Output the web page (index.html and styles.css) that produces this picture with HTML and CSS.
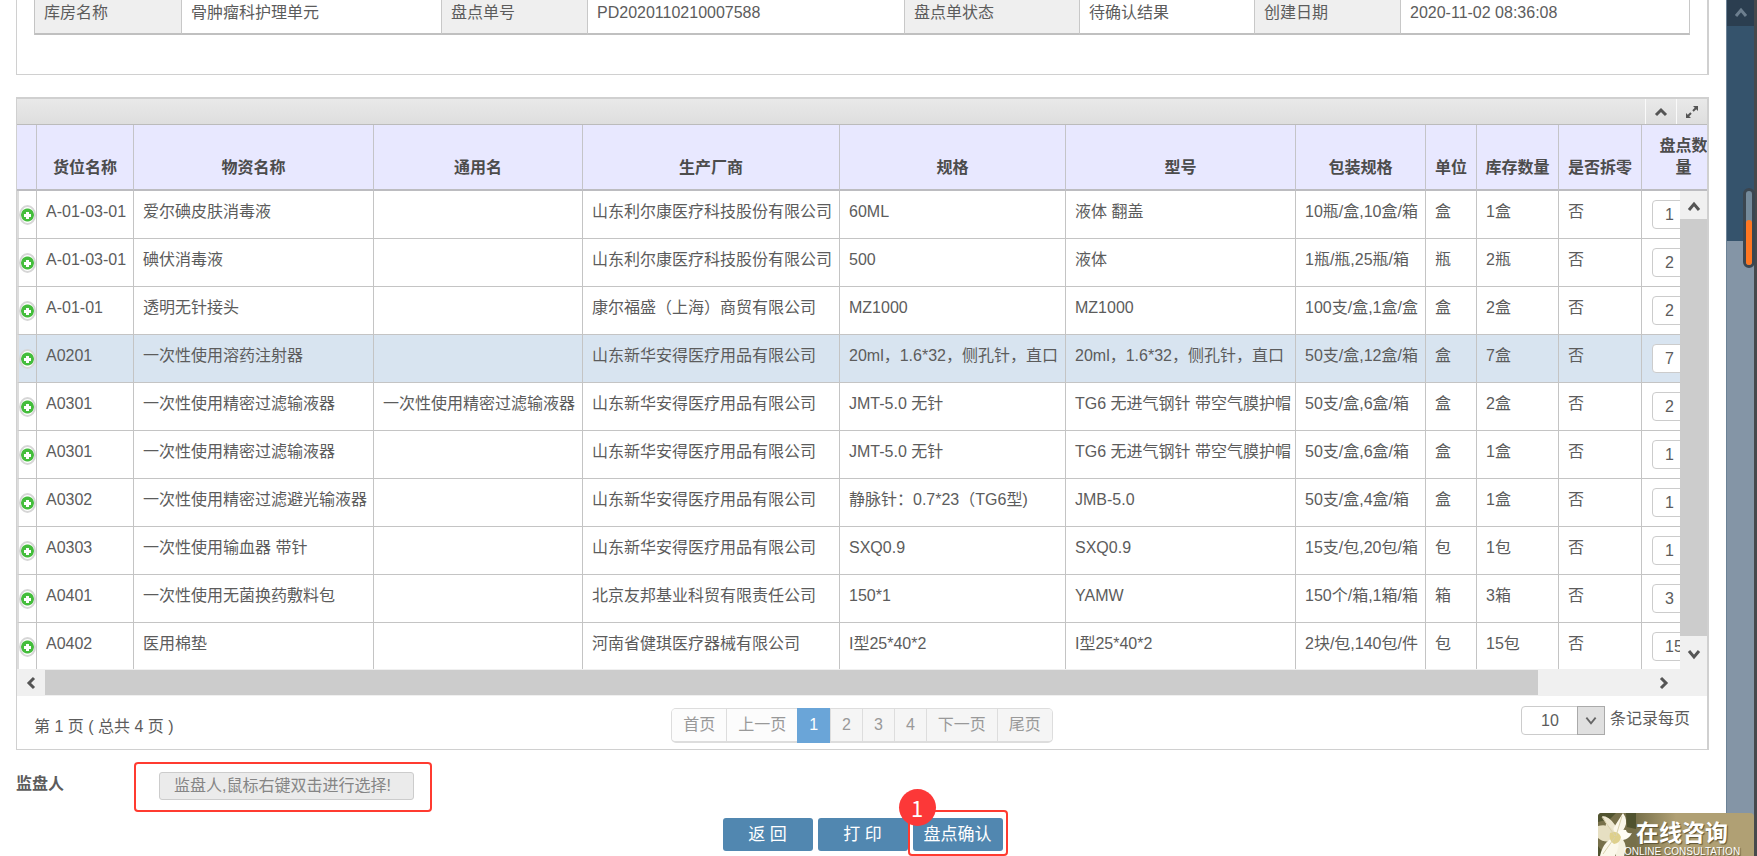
FILE: index.html
```html
<!DOCTYPE html>
<html lang="zh-CN">
<head>
    <meta charset="UTF-8">
    <meta name="viewport" content="width=device-width, initial-scale=1.0">
    <title>盘点单</title>
    <link rel="stylesheet" href="styles.css">
</head>
<body>

    <main class="content">
        <section class="panel info-panel">
            <table class="info">
                <colgroup>
                    <col class="i-store"><col class="i-store-val"><col class="i-no"><col class="i-no-val">
                    <col class="i-state"><col class="i-state"><col class="i-no"><col>
                </colgroup>
                <tr>
                    <th>库房名称</th><td>骨肿瘤科护理单元</td>
                    <th>盘点单号</th><td>PD2020110210007588</td>
                    <th>盘点单状态</th><td>待确认结果</td>
                    <th>创建日期</th><td>2020-11-02 08:36:08</td>
                </tr>
            </table>
        </section>

        <section class="panel grid-panel">
            <div class="toolbar">
                <button type="button" class="tool" aria-label="收起">
                    <svg width="14" height="10" viewBox="0 0 14 10"><path d="M2 8l5-5 5 5" fill="none" stroke="#555" stroke-width="3"/></svg>
                </button>
                <button type="button" class="tool" aria-label="全屏">
                    <svg width="14" height="14" viewBox="0 0 14 14"><path d="M8 1h5v5zM1 8v5h5z" fill="#555"/><path d="M11 3L8 6M3 11l3-3" stroke="#555" stroke-width="2"/></svg>
                </button>
            </div>

            <div class="grid-head">
                <table class="grid">
                    <colgroup>
                        <col class="c-plus"><col class="c-pos"><col class="c-name"><col class="c-common"><col class="c-maker"><col class="c-spec">
                        <col class="c-model"><col class="c-pack"><col class="c-unit"><col class="c-stock"><col class="c-split"><col class="c-count">
                    </colgroup>
                    <thead>
                        <tr>
                            <th></th><th>货位名称</th><th>物资名称</th><th>通用名</th><th>生产厂商</th><th>规格</th>
                            <th>型号</th><th>包装规格</th><th>单位</th><th>库存数量</th><th>是否拆零</th><th class="wrap">盘点数量</th>
                        </tr>
                    </thead>
                </table>
            </div>

            <div class="grid-body">
                <div class="grid-view">
                    <table class="grid">
                        <colgroup>
                            <col class="c-plus"><col class="c-pos"><col class="c-name"><col class="c-common"><col class="c-maker"><col class="c-spec">
                            <col class="c-model"><col class="c-pack"><col class="c-unit"><col class="c-stock"><col class="c-split"><col class="c-count">
                        </colgroup>
                        <tbody>
                            <tr>
                                <td><button type="button" class="plus" aria-label="展开"></button></td><td>A-01-03-01</td><td>爱尔碘皮肤消毒液</td><td></td>
                                <td>山东利尔康医疗科技股份有限公司</td><td>60ML</td><td>液体 翻盖</td>
                                <td>10瓶/盒,10盒/箱</td><td>盒</td><td>1盒</td><td>否</td><td><input type="text" aria-label="盘点数量" value="1"></td>
                            </tr>
                            <tr>
                                <td><button type="button" class="plus" aria-label="展开"></button></td><td>A-01-03-01</td><td>碘伏消毒液</td><td></td>
                                <td>山东利尔康医疗科技股份有限公司</td><td>500</td><td>液体</td>
                                <td>1瓶/瓶,25瓶/箱</td><td>瓶</td><td>2瓶</td><td>否</td><td><input type="text" aria-label="盘点数量" value="2"></td>
                            </tr>
                            <tr>
                                <td><button type="button" class="plus" aria-label="展开"></button></td><td>A-01-01</td><td>透明无针接头</td><td></td>
                                <td>康尔福盛（上海）商贸有限公司</td><td>MZ1000</td><td>MZ1000</td>
                                <td>100支/盒,1盒/盒</td><td>盒</td><td>2盒</td><td>否</td><td><input type="text" aria-label="盘点数量" value="2"></td>
                            </tr>
                            <tr class="selected">
                                <td><button type="button" class="plus" aria-label="展开"></button></td><td>A0201</td><td>一次性使用溶药注射器</td><td></td>
                                <td>山东新华安得医疗用品有限公司</td><td>20ml，1.6*32，侧孔针，直口</td><td>20ml，1.6*32，侧孔针，直口</td>
                                <td>50支/盒,12盒/箱</td><td>盒</td><td>7盒</td><td>否</td><td><input type="text" aria-label="盘点数量" value="7"></td>
                            </tr>
                            <tr>
                                <td><button type="button" class="plus" aria-label="展开"></button></td><td>A0301</td><td>一次性使用精密过滤输液器</td><td>一次性使用精密过滤输液器</td>
                                <td>山东新华安得医疗用品有限公司</td><td>JMT-5.0 无针</td><td>TG6 无进气钢针 带空气膜护帽</td>
                                <td>50支/盒,6盒/箱</td><td>盒</td><td>2盒</td><td>否</td><td><input type="text" aria-label="盘点数量" value="2"></td>
                            </tr>
                            <tr>
                                <td><button type="button" class="plus" aria-label="展开"></button></td><td>A0301</td><td>一次性使用精密过滤输液器</td><td></td>
                                <td>山东新华安得医疗用品有限公司</td><td>JMT-5.0 无针</td><td>TG6 无进气钢针 带空气膜护帽</td>
                                <td>50支/盒,6盒/箱</td><td>盒</td><td>1盒</td><td>否</td><td><input type="text" aria-label="盘点数量" value="1"></td>
                            </tr>
                            <tr>
                                <td><button type="button" class="plus" aria-label="展开"></button></td><td>A0302</td><td>一次性使用精密过滤避光输液器</td><td></td>
                                <td>山东新华安得医疗用品有限公司</td><td>静脉针：0.7*23（TG6型)</td><td>JMB-5.0</td>
                                <td>50支/盒,4盒/箱</td><td>盒</td><td>1盒</td><td>否</td><td><input type="text" aria-label="盘点数量" value="1"></td>
                            </tr>
                            <tr>
                                <td><button type="button" class="plus" aria-label="展开"></button></td><td>A0303</td><td>一次性使用输血器 带针</td><td></td>
                                <td>山东新华安得医疗用品有限公司</td><td>SXQ0.9</td><td>SXQ0.9</td>
                                <td>15支/包,20包/箱</td><td>包</td><td>1包</td><td>否</td><td><input type="text" aria-label="盘点数量" value="1"></td>
                            </tr>
                            <tr>
                                <td><button type="button" class="plus" aria-label="展开"></button></td><td>A0401</td><td>一次性使用无菌换药敷料包</td><td></td>
                                <td>北京友邦基业科贸有限责任公司</td><td>150*1</td><td>YAMW</td>
                                <td>150个/箱,1箱/箱</td><td>箱</td><td>3箱</td><td>否</td><td><input type="text" aria-label="盘点数量" value="3"></td>
                            </tr>
                            <tr>
                                <td><button type="button" class="plus" aria-label="展开"></button></td><td>A0402</td><td>医用棉垫</td><td></td>
                                <td>河南省健琪医疗器械有限公司</td><td>I型25*40*2</td><td>I型25*40*2</td>
                                <td>2块/包,140包/件</td><td>包</td><td>15包</td><td>否</td><td><input type="text" aria-label="盘点数量" value="15"></td>
                            </tr>
                        </tbody>
                    </table>
                </div>
                <div class="vbar">
                    <svg width="14" height="12" viewBox="0 0 14 12"><path d="M2 9l5-6 5 6" fill="none" stroke="#555" stroke-width="3"/></svg>
                    <div class="thumb"></div>
                    <svg width="14" height="12" viewBox="0 0 14 12"><path d="M2 3l5 6 5-6" fill="none" stroke="#555" stroke-width="3"/></svg>
                </div>
            </div>

            <div class="hbar">
                <svg width="12" height="14" viewBox="0 0 12 14"><path d="M9 2L4 7l5 5" fill="none" stroke="#555" stroke-width="3"/></svg>
                <div class="track"><div class="thumb"></div></div>
                <svg width="12" height="14" viewBox="0 0 12 14"><path d="M3 2l5 5-5 5" fill="none" stroke="#555" stroke-width="3"/></svg>
            </div>

            <div class="grid-foot">
                <span class="page-info">第 1 页 ( 总共 4 页 )</span>
                <nav class="pager">
                    <a href="#" class="off">首页</a><a href="#" class="off">上一页</a><a href="#" class="current">1</a><a href="#">2</a><a href="#">3</a><a href="#">4</a><a href="#">下一页</a><a href="#">尾页</a>
                </nav>
                <div class="page-size">
                    <span class="select-box">
                        <select id="pageSize"><option>10</option><option>20</option><option>50</option></select>
                        <svg width="28" height="28" viewBox="0 0 28 28"><path d="M9 11l5 6 5-6" fill="none" stroke="#666" stroke-width="2"/></svg>
                    </span>
                    <label for="pageSize">条记录每页</label>
                </div>
            </div>
        </section>

        <div class="supervisor">
            <label for="supervisor">监盘人</label>
            <div class="marked">
                <input type="text" id="supervisor" placeholder="监盘人,鼠标右键双击进行选择!" readonly>
            </div>
        </div>

        <div class="actions">
            <button type="button">返 回</button>
            <button type="button">打 印</button>
            <div class="confirm">
                <button type="button">盘点确认</button>
                <span class="mark-frame"></span>
                <span class="mark-no">1</span>
            </div>
        </div>
    </main>

    <aside class="page-bar">
        <div class="page-up">
            <svg width="14" height="12" viewBox="0 0 14 12"><path d="M2 9l5-6 5 6" fill="none" stroke="#6d7f8f" stroke-width="3"/></svg>
        </div>
        <div class="page-thumb"></div>
    </aside>
    <div class="meter"><span></span></div>

    <a href="#" class="consult">
        <svg class="lily" width="38" height="43" viewBox="0 0 38 43">
            <path d="M0 0h38v43H0z" fill="#77704a"/>
            <path d="M0 0h18l-6 6-12 3zM28 0h10v16l-9-2zM0 33l8 10H0z" fill="#50532f"/>
            <path d="M4 3q7 0 13 9l2 12Q6 22 8 10z" fill="#ece6cf"/>
            <path d="M25 0q5 7 2 14l-7 12q-8-8-2-15z" fill="#fbf7ea"/>
            <path d="M0 13q14-4 20 12Q8 32 0 25z" fill="#e6dfc2"/>
            <path d="M17 24q3-9 11-7 1 4 6 3-3 6-9 7-5 1-8-3z" fill="#fffdf4"/>
            <path d="M17 24q10 0 11 11l-2 8h-8z" fill="#f5f1df"/>
            <path d="M20 24Q6 25 2 43h15q5-9 3-19z" fill="#fbf8ea"/>
            <path d="M12 20q8-3 11 4-1 6-7 7-6-4-4-11z" fill="#ded08c"/>
            <path d="M4 4l13 19M24 3l-6 20M5 41l12-17" stroke="#d8d0ac" fill="none"/>
        </svg>
        <strong>在线咨询</strong>
        <small>ONLINE CONSULTATION</small>
    </a>

</body>
</html>
```
FILE: styles.css
```css
* {
    box-sizing: border-box;
}
body {
    margin: 0;
    height: 100vh;
    overflow: hidden;
    display: flex;
    position: relative;
    background: #fff;
    color: #5c5c5c;
    font: 16px/22px "Liberation Sans", "Noto Sans CJK SC", sans-serif;
}
input, select, button {
    font: inherit;
    color: inherit;
}
svg {
    display: block;
}
table {
    table-layout: fixed;
    border-collapse: separate;
    border-spacing: 0;
}
.content {
    flex: 1;
    min-width: 0;
    padding: 0 17px 0 16px;
}
.panel {
    border: 1px solid #d0d0d0;
    border-right-width: 2px;
}

/* order info */
.info-panel {
    border-top: 0;
    padding: 0 17px 39px;
}
.info {
    width: 100%;
    border-left: 1px solid #c4c4c4;
}
.info th, .info td {
    padding: 2px 9px 9px;
    border-right: 1px solid #c8c8c8;
    border-bottom: 2px solid #c0c0c0;
    font-weight: normal;
    text-align: left;
    white-space: nowrap;
}
.info th {
    background: #efefef;
}
.i-store { width: 147px; }
.i-store-val { width: 260px; }
.i-no { width: 146px; }
.i-no-val { width: 317px; }
.i-state { width: 175px; }

/* stock grid */
.grid-panel {
    margin-top: 22px;
    border-top: 2px solid #d0d0d0;
}
.toolbar {
    height: 26px;
    display: flex;
    justify-content: flex-end;
    background: linear-gradient(#e9e9e9, #dedede);
    border-bottom: 1px solid #bbb;
}
.tool {
    width: 31px;
    padding: 0;
    display: flex;
    align-items: center;
    justify-content: center;
    border: 0;
    border-left: 1px solid #fafafa;
    background: none;
}
.grid-head, .grid-view {
    overflow: hidden;
}
.grid {
    width: 1709px;
}
.c-plus { width: 20px; }
.c-pos { width: 97px; }
.c-name { width: 240px; }
.c-common { width: 209px; }
.c-maker { width: 257px; }
.c-spec { width: 226px; }
.c-model { width: 230px; }
.c-pack { width: 130px; }
.c-unit { width: 51px; }
.c-stock { width: 82px; }
.c-split { width: 83px; }
.c-count { width: 84px; }
.grid th {
    height: 66px;
    padding: 0 8px 10px;
    vertical-align: bottom;
    background: #e8e8ff;
    border-right: 1px solid #c4c4c8;
    border-bottom: 2px solid #bcbcc0;
    color: #4c4c4c;
    white-space: nowrap;
}
.grid th.wrap {
    padding: 0 14px 10px;
    white-space: normal;
}
.grid td {
    height: 48px;
    padding: 10px 0 0 9px;
    vertical-align: top;
    border-right: 1px solid #c4c4c4;
    border-bottom: 1px solid #c4c4c4;
    white-space: nowrap;
}
.grid td:first-child {
    padding: 14px 0 0;
    border-left: 2px solid #dcdcdc;
}
.grid td:last-child {
    padding: 9px 0 0 10px;
}
.grid .selected td {
    background: #d8e4f0;
}
.grid input {
    width: 64px;
    height: 29px;
    display: block;
    padding: 0 12px;
    border: 1px solid #ccc;
    border-radius: 4px;
    background: #fff;
}
.plus {
    width: 17px;
    height: 20px;
    display: block;
    padding: 0;
    border: 2px solid #d6d6d6;
    border-radius: 50%;
    background:
        linear-gradient(#fff, #fff) center / 7px 3px no-repeat,
        linear-gradient(#fff, #fff) center / 3px 7px no-repeat,
        radial-gradient(circle, #44bd3c 6px, #fff 7px);
}
.grid-body {
    display: flex;
    height: 478px;
}
.grid-view {
    flex: 1;
}
.vbar {
    width: 27px;
    display: flex;
    flex-direction: column;
    align-items: center;
    gap: 6px;
    padding: 10px 0 9px;
    background: #f0f0f0;
}
.vbar .thumb {
    flex: 1;
    width: 100%;
    margin-bottom: 6px;
    background: #ccc;
}
.hbar {
    height: 27px;
    display: flex;
    align-items: center;
    gap: 8px;
    padding: 0 37px 0 8px;
    background: #f0f0f0;
}
.hbar .track {
    flex: 1;
}
.hbar .thumb {
    width: 93%;
    height: 25px;
    background: #ccc;
}
.grid-foot {
    display: grid;
    grid-template-columns: 1fr auto 1fr;
    padding: 10px 17px 6px;
}
.page-info {
    padding-top: 10px;
}
.pager {
    display: flex;
    margin-top: 2px;
    border: 1px solid #ddd;
    border-bottom-width: 2px;
    border-radius: 5px;
}
.pager a {
    padding: 5px 11px;
    border-left: 1px solid #ddd;
    background: #f5f5f5;
    color: #999;
    text-decoration: none;
}
.pager a:first-child {
    border-left: 0;
    border-radius: 4px 0 0 4px;
}
.pager a:last-child {
    border-radius: 0 4px 4px 0;
}
.pager .off {
    background: #fcfcfc;
}
.pager .current {
    margin: -1px 0 -2px;
    padding: 6px 12px 7px;
    border: 0;
    background: #6aa5d8;
    color: #fff;
}
.page-size {
    display: flex;
    align-items: flex-start;
    justify-content: flex-end;
    gap: 5px;
}
.page-size label {
    padding-top: 2px;
}
.select-box {
    position: relative;
}
.select-box select {
    width: 84px;
    height: 29px;
    display: block;
    padding: 0 0 0 19px;
    appearance: none;
    border: 1px solid #ccc;
    border-radius: 4px;
    background: #fff;
}
.select-box svg {
    position: absolute;
    top: 0;
    right: 0;
    height: 29px;
    border: 1px solid #aaa;
    background: #e0e0e0;
    pointer-events: none;
}

/* supervisor and buttons */
.supervisor {
    display: flex;
    align-items: flex-start;
    margin-top: 12px;
}
.supervisor label {
    width: 118px;
    padding-top: 11px;
    font-weight: bold;
}
.marked {
    padding: 8px 16px 10px 23px;
    border: 2px solid #ff3b30;
    border-radius: 4px;
}
.marked input {
    width: 255px;
    height: 28px;
    display: block;
    padding: 0 14px;
    border: 1px solid #ccc;
    border-radius: 3px;
    background: #ebebeb;
}
.marked input::placeholder {
    color: #858585;
}
.actions {
    display: flex;
    justify-content: center;
    gap: 5px;
    margin-top: 6px;
}
.actions button {
    width: 90px;
    height: 33px;
    display: block;
    padding: 0;
    border: 0;
    border-radius: 3px;
    background: #5187b0;
    color: #fff;
    font-size: 17px;
}
.confirm {
    position: relative;
}
.mark-frame {
    position: absolute;
    inset: -8px -5px -5px;
    border: 2px solid #ff3b30;
    border-radius: 4px;
    pointer-events: none;
}
.mark-no {
    position: absolute;
    top: -29px;
    left: -14px;
    width: 37px;
    border-radius: 50%;
    background: #fc3838;
    color: #fff;
    font: 22px/37px "Noto Sans CJK SC", sans-serif;
    text-align: center;
}

/* window scrollbar */
.page-bar {
    width: 31px;
    background: #8495a6;
    border-left: 1px solid #6c8296;
    border-right: 3px solid #46494c;
}
.page-up {
    height: 26px;
    display: flex;
    align-items: center;
    justify-content: center;
    background: #2b3e50;
}
.page-thumb {
    height: 215px;
    background: #35536c;
}
.meter {
    position: absolute;
    top: 188px;
    right: 2px;
    width: 12px;
    height: 80px;
    display: flex;
    align-items: flex-end;
    border: 3px solid #3b4650;
    border-radius: 6px;
    background: #748a9b;
}
.meter span {
    width: 6px;
    height: 45px;
    border-radius: 3px;
    background: #ff7722;
}
.consult {
    position: absolute;
    right: 3px;
    bottom: 0;
    width: 156px;
    height: 43px;
    padding-left: 26px;
    overflow: hidden;
    border-radius: 4px 4px 0 0;
    background: linear-gradient(90deg, #77704a 24%, #b0a074 50%);
    color: #fff;
    text-decoration: none;
    text-shadow: 1px 1px 1px #5c5333;
    white-space: nowrap;
}
.consult .lily {
    position: absolute;
    top: 0;
    left: 0;
}
.consult strong {
    position: relative;
    display: block;
    padding: 9px 0 0 12px;
    font-size: 23px;
    line-height: 23px;
}
.consult small {
    position: relative;
    display: block;
    font-size: 10px;
    line-height: 14px;
}
```
